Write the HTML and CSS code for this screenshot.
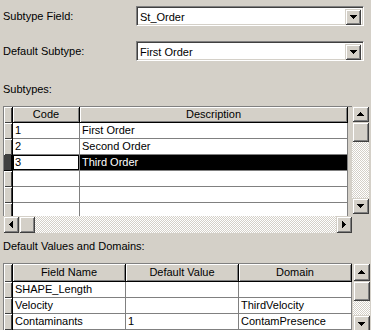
FILE: index.html
```html
<!DOCTYPE html>
<html>
<head>
<meta charset="utf-8">
<link rel="stylesheet" href="styles.css">
</head>
<body>
<div class="dlg">
  <div class="field">
    <span class="lbl">Subtype Field:</span>
    <div class="combo"><span class="combo-text">St_Order</span><span class="btn drop"><svg width="7" height="4" viewBox="0 0 7 4"><path d="M0 0h7v1H0zM1 1h5v1H1zM2 2h3v1H2zM3 3h1v1H3z"/></svg></span></div>
  </div>
  <div class="field f2">
    <span class="lbl">Default Subtype:</span>
    <div class="combo"><span class="combo-text">First Order</span><span class="btn drop"><svg width="7" height="4" viewBox="0 0 7 4"><path d="M0 0h7v1H0zM1 1h5v1H1zM2 2h3v1H2zM3 3h1v1H3z"/></svg></span></div>
  </div>
  <div class="section-lbl s1">Subtypes:</div>
  <div class="gwrap g1">
    <div class="gmain">
      <div class="grid">
        <div class="row head">
          <div class="sel"></div><div class="hc w-code">Code</div><div class="hc w-desc">Description</div>
        </div>
        <div class="row"><div class="sel"></div><div class="cell w-code">1</div><div class="cell w-desc">First Order</div></div>
        <div class="row"><div class="sel"></div><div class="cell w-code">2</div><div class="cell w-desc">Second Order</div></div>
        <div class="row current"><div class="sel"></div><div class="cell w-code focus">3</div><div class="cell w-desc selected">Third Order</div></div>
        <div class="row"><div class="sel"></div><div class="cell w-code"></div><div class="cell w-desc"></div></div>
        <div class="row"><div class="sel"></div><div class="cell w-code"></div><div class="cell w-desc"></div></div>
        <div class="row"><div class="sel"></div><div class="cell w-code"></div><div class="cell w-desc"></div></div>
      </div>
      <div class="hscroll">
        <span class="btn sbtn"><svg width="4" height="7" viewBox="0 0 4 7"><path d="M3 0h1v7H3zM2 1h1v5H2zM1 2h1v3H1zM0 3h1v1H0z"/></svg></span>
        <span class="btn sbtn"></span>
        <span class="track"></span>
        <span class="btn sbtn"><svg width="4" height="7" viewBox="0 0 4 7"><path d="M0 0h1v7H0zM1 1h1v5H1zM2 2h1v3H2zM3 3h1v1H3z"/></svg></span>
      </div>
    </div>
    <div class="vscroll v1">
      <span class="btn sbtn"><svg width="7" height="4" viewBox="0 0 7 4"><path d="M3 0h1v1H3zM2 1h3v1H2zM1 2h5v1H1zM0 3h7v1H0z"/></svg></span>
      <span class="btn sbtn thumb"></span>
      <span class="track"></span>
      <span class="btn sbtn"><svg width="7" height="4" viewBox="0 0 7 4"><path d="M0 0h7v1H0zM1 1h5v1H1zM2 2h3v1H2zM3 3h1v1H3z"/></svg></span>
    </div>
  </div>
  <div class="section-lbl s2">Default Values and Domains:</div>
  <div class="gwrap g2">
    <div class="gmain">
      <div class="grid">
        <div class="row head">
          <div class="sel"></div><div class="hc w-col">Field Name</div><div class="hc w-col">Default Value</div><div class="hc w-col">Domain</div>
        </div>
        <div class="row"><div class="sel"></div><div class="cell w-col">SHAPE_Length</div><div class="cell w-col"></div><div class="cell w-col"></div></div>
        <div class="row"><div class="sel"></div><div class="cell w-col">Velocity</div><div class="cell w-col"></div><div class="cell w-col">ThirdVelocity</div></div>
        <div class="row"><div class="sel"></div><div class="cell w-col">Contaminants</div><div class="cell w-col">1</div><div class="cell w-col">ContamPresence</div></div>
      </div>
    </div>
    <div class="vscroll v2">
      <span class="btn sbtn"><svg width="7" height="4" viewBox="0 0 7 4"><path d="M3 0h1v1H3zM2 1h3v1H2zM1 2h5v1H1zM0 3h7v1H0z"/></svg></span>
      <span class="btn sbtn thumb"></span>
      <span class="track"></span>
      <span class="btn sbtn"><svg width="7" height="4" viewBox="0 0 7 4"><path d="M0 0h7v1H0zM1 1h5v1H1zM2 2h3v1H2zM3 3h1v1H3z"/></svg></span>
    </div>
  </div>
</div>
</body>
</html>
```

FILE: styles.css
```css
* { box-sizing: border-box; }
html, body {
  margin: 0;
  background: #d4d0c8;
  width: 371px;
  height: 330px;
  overflow: hidden;
}
body {
  font: 11px "Liberation Sans", Arial, sans-serif;
  color: #000;
}
svg { display: block; shape-rendering: crispEdges; fill: #000; }

.dlg { padding: 6px 0 0 3px; }

.field { display: flex; align-items: center; height: 20px; }
.f2 { margin-top: 15px; }
.lbl { width: 133px; line-height: 13px; }

.combo {
  width: 228px;
  height: 20px;
  display: flex;
  background: #fff;
  border: 1px solid;
  border-color: #808080 #fff #fff #808080;
  box-shadow: inset 1px 1px #404040, inset -1px -1px #d4d0c8;
  padding: 2px;
}
.combo-text { flex: 1; line-height: 16px; padding-left: 1px; }
.drop { width: 16px; height: 16px; }

.btn {
  background: #d4d0c8;
  box-shadow: inset 1px 1px #d4d0c8, inset -1px -1px #404040, inset 2px 2px #fff, inset -2px -2px #808080;
  display: flex;
  align-items: center;
  justify-content: center;
  flex: none;
}

.section-lbl { line-height: 13px; }
.s1 { margin-top: 22px; }
.s2 { margin-top: 7px; }

.gwrap { display: flex; margin-top: 10px; }
.gmain { width: 349px; display: flex; flex-direction: column; }
.g1 .grid { height: 110px; overflow: hidden; }
.g2 .gmain { margin-right: 1px; }

.grid { border-top: 1px solid #808080; border-left: 1px solid #808080; }
.row { display: flex; height: 16px; }
.head { height: 16px; }
.g2 .head { height: 18px; }

.sel {
  width: 9px;
  flex: none;
  background: #d4d0c8;
  box-shadow: inset 1px 1px #fff, inset -1px -1px #404040;
  border-right: 1px solid #000;
}
.current .sel { background: #404040; box-shadow: inset -1px -1px #000; }

.hc {
  flex: none;
  background: #d4d0c8;
  text-align: center;
  line-height: 15px;
  border-right: 1px solid #000;
  border-bottom: 1px solid #000;
  box-shadow: inset 1px 1px #fff, inset -1px -1px #808080;
}
.g2 .hc { line-height: 17px; }

.cell {
  flex: none;
  background: #fff;
  border-right: 1px solid #808080;
  border-bottom: 1px solid #808080;
  line-height: 15px;
  padding-left: 2px;
  white-space: nowrap;
  overflow: hidden;
}
.w-code { width: 67px; }
.w-desc { width: 268px; }
.w-col { width: 113px; }

.focus { box-shadow: inset 0 0 0 1px #000; }
.selected { background: #000; color: #fff; }

.track {
  flex: 1;
  background: repeating-conic-gradient(#fff 0 25%, #d4d0c8 0 50%) 0 0 / 2px 2px;
}
.hscroll { display: flex; height: 17px; margin-top: 0; }
.hscroll .sbtn { width: 16px; height: 17px; }

.vscroll { width: 17px; display: flex; flex-direction: column; }
.v1 { height: 108px; }
.v2 { height: 70px; }
.vscroll .sbtn { width: 17px; height: 16px; }
.v1 .thumb { height: 20px; }
.v2 .sbtn { height: 18px; }
.v2 .thumb { height: 20px; }
```
